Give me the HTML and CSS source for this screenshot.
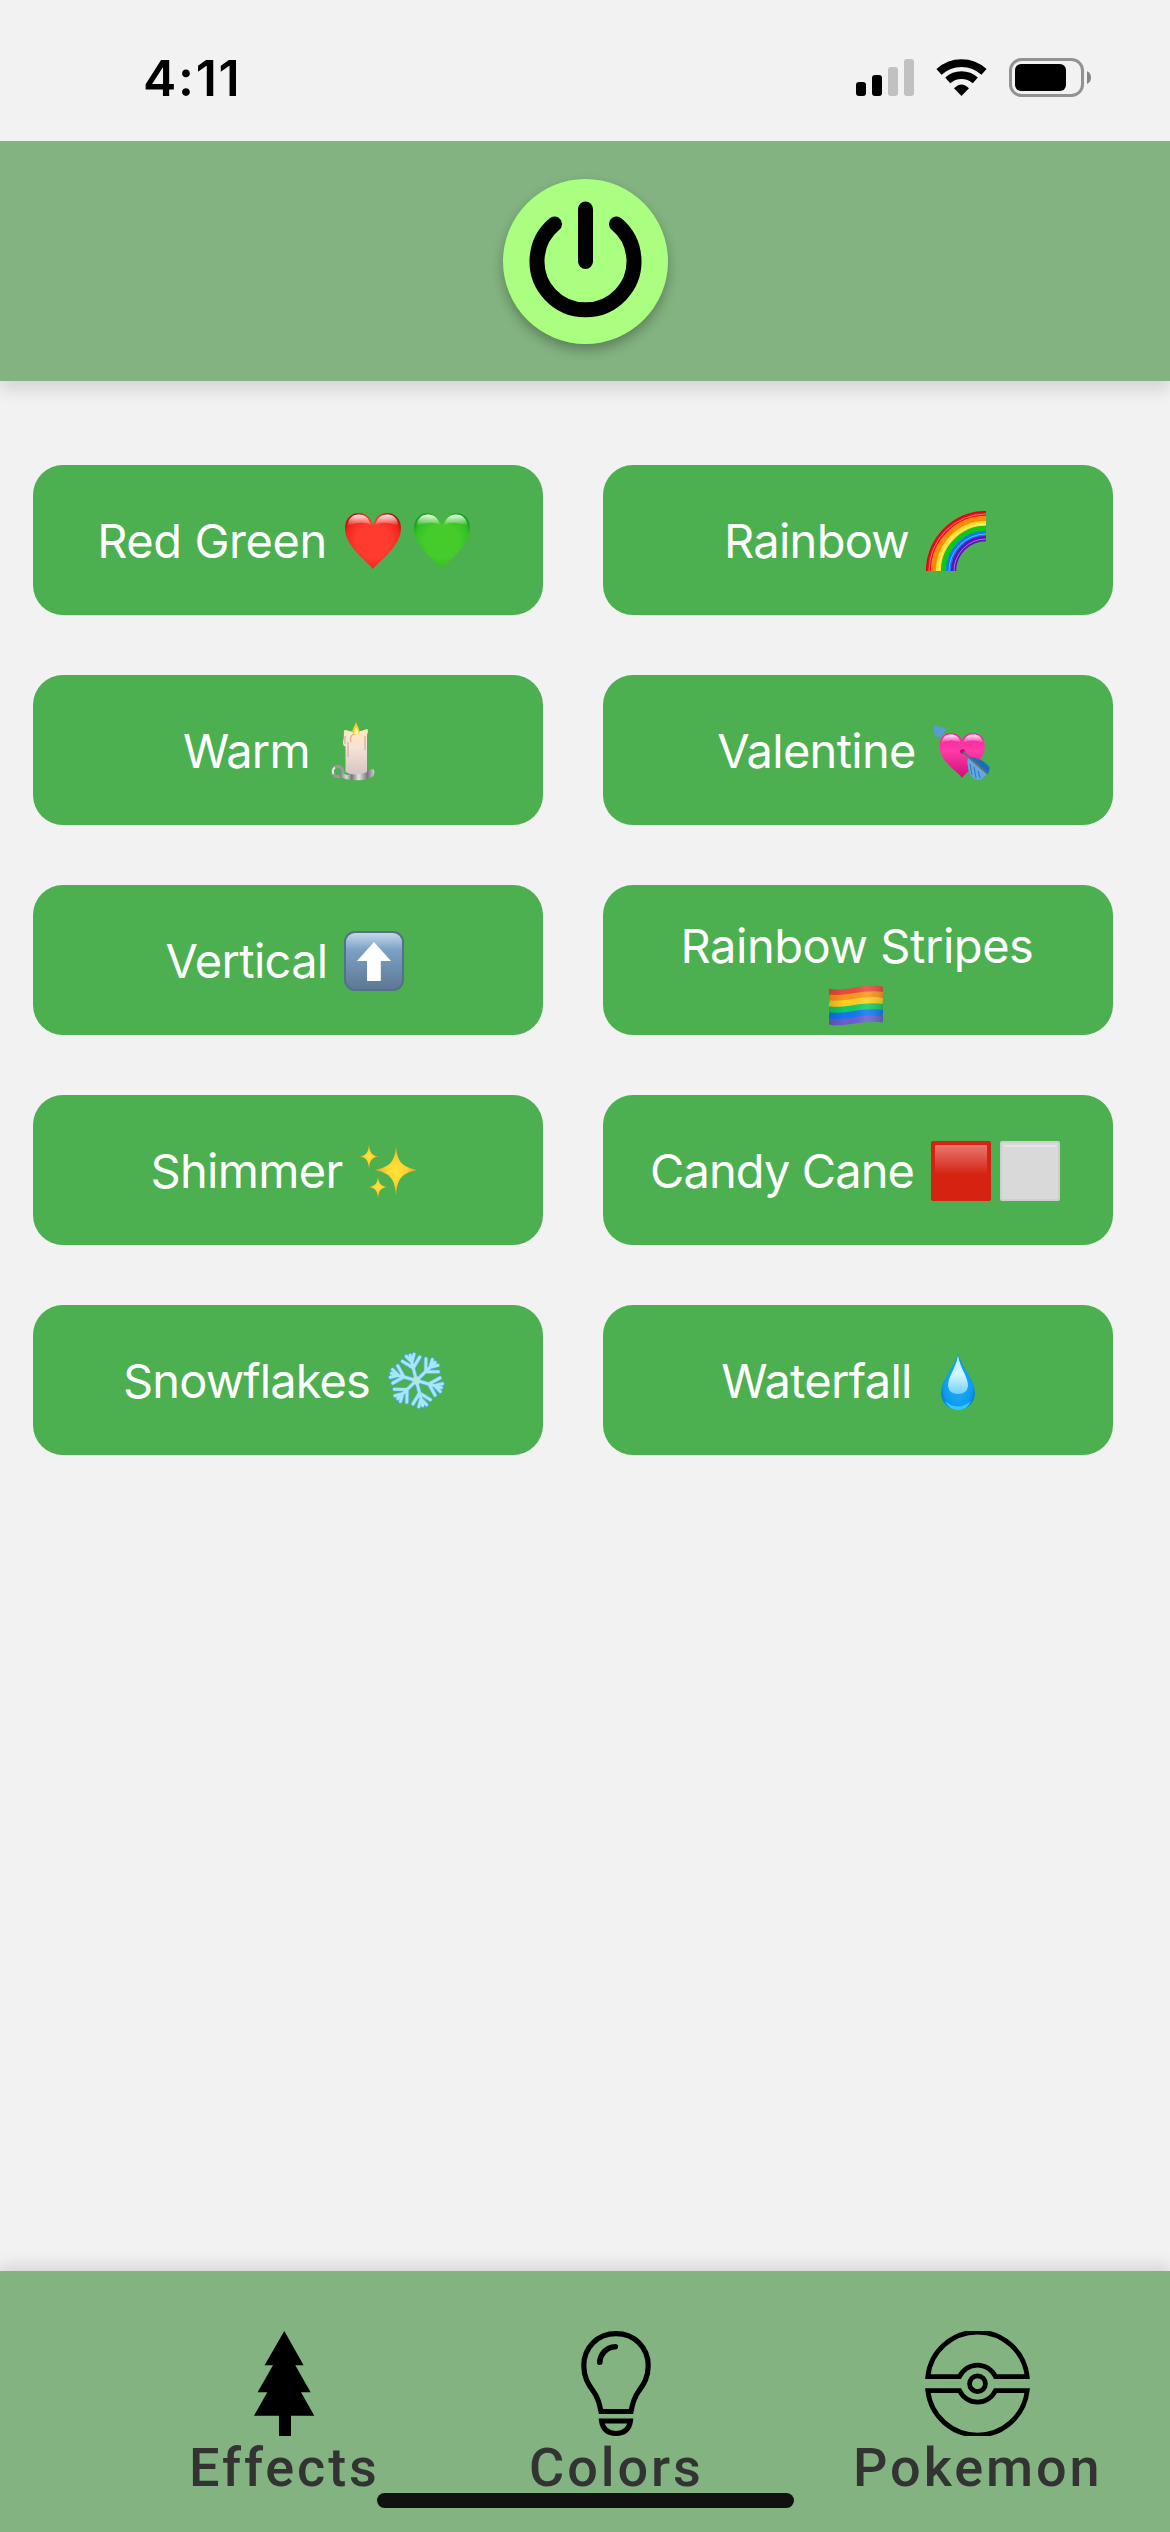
FILE: index.html
```html
<!DOCTYPE html>
<html lang="en">
<head>
<meta charset="utf-8">
<title>Lights</title>
<link rel="stylesheet" href="styles.css">
</head>
<body>
<div class="screen">
  <div class="status">
    <span class="time">4:11</span>
    <div class="status-icons">
      <svg class="signal" width="58" height="37" viewBox="0 0 58 37">
        <rect x="0" y="23" width="10" height="14" rx="3"/>
        <rect x="16" y="16" width="10" height="21" rx="3"/>
        <rect x="32" y="8" width="10" height="29" rx="3" fill="#c1c1c1"/>
        <rect x="48" y="0" width="10" height="37" rx="3" fill="#c1c1c1"/>
      </svg>
      <svg class="wifi" width="51" height="37" viewBox="0 0 51 37">
        <g fill="none" stroke="#000" stroke-width="7.6">
          <path d="M3 12.9A33.2 33.2 0 0 1 48 12.9"/>
          <path d="M11.7 21.4A20.8 20.8 0 0 1 39.3 21.4"/>
        </g>
        <path d="M25.5 37L18 29.3Q25.500 21.500 33 29.300Z"/>
      </svg>
      <svg class="battery" width="82" height="39" viewBox="0 0 82 39">
        <rect x="1.500" y="1.500" width="72" height="36" rx="11" fill="none" stroke="#929292" stroke-width="3"/>
        <rect x="6" y="6" width="51" height="27" rx="6"/>
        <path d="M78 13Q82 15 82 19.500T78 26Z" fill="#858585"/>
      </svg>
    </div>
  </div>

  <header class="header">
    <button class="power" aria-label="Power">
      <svg width="165" height="165" viewBox="0 0 165 165" fill="none" stroke="#000" stroke-width="15" stroke-linecap="round">
        <path d="M82.500 30V82.500"/>
        <path d="M51.500 45A48.500 48.500 0 1 0 113.500 45"/>
      </svg>
    </button>
  </header>

  <main class="grid">
    <button class="effect"><span class="label loose">Red Green</span>
      <svg class="emoji" viewBox="0 0 60 60">
        <defs>
          <radialGradient id="red" cx=".5" cy=".5" r=".6"><stop offset=".5" stop-color="#ff3b2f"/><stop offset=".8" stop-color="#f5281d"/><stop offset="1" stop-color="#b80c06"/></radialGradient>
          <linearGradient id="gloss" x1="0" y1="0" x2="0" y2="1"><stop offset="0" stop-color="#fff" stop-opacity=".95"/><stop offset="1" stop-color="#fff" stop-opacity="0"/></linearGradient>
        </defs>
        <path d="M30 58C27 53 2 36 2 17.500C2 8 8 2 16 2C23 2 28 7 30 14.500C32 7 37 2 44 2C52 2 58 8 58 17.500C58 36 33 53 30 58Z" fill="url(#red)"/>
        <path d="M4.500 15C5 8 9 3.500 16 3.500C22 3.500 26 7 28 14Q20 9 4.500 15ZM55.500 15C55 8 51 3.500 44 3.500C38 3.500 34 7 32 14Q40 9 55.500 15Z" fill="url(#gloss)"/>
      </svg>
      <svg class="emoji" viewBox="0 0 60 60">
        <defs><radialGradient id="green" cx=".5" cy=".5" r=".6"><stop offset=".5" stop-color="#45cc2b"/><stop offset=".8" stop-color="#34c024"/><stop offset="1" stop-color="#0a9a18"/></radialGradient></defs>
        <path d="M30 58C27 53 2 36 2 17.500C2 8 8 2 16 2C23 2 28 7 30 14.500C32 7 37 2 44 2C52 2 58 8 58 17.500C58 36 33 53 30 58Z" fill="url(#green)"/>
        <path d="M4.500 15C5 8 9 3.500 16 3.500C22 3.500 26 7 28 14Q20 9 4.500 15ZM55.500 15C55 8 51 3.500 44 3.500C38 3.500 34 7 32 14Q40 9 55.500 15Z" fill="url(#gloss)"/>
      </svg>
    </button>

    <button class="effect"><span class="label">Rainbow</span>
      <svg class="emoji" viewBox="0 0 60 60" fill="none" stroke-width="5.300">
        <path d="M2.500 60A57.500 59 0 0 1 60 2.500" stroke="#e8101c"/>
        <path d="M7.500 60A52.500 53 0 0 1 60 7.500" stroke="#ff8a08"/>
        <path d="M12.500 60A47.500 48 0 0 1 60 12.500" stroke="#ffdf2e"/>
        <path d="M17.500 60A42.500 43 0 0 1 60 17.500" stroke="#12c51a"/>
        <path d="M22.500 60A37.500 38 0 0 1 60 22.500" stroke="#0b7bf0"/>
        <path d="M27.500 60A32.500 33 0 0 1 60 27.500" stroke="#5a14bd"/>
        <g stroke-width="1" stroke-opacity=".4">
          <path d="M3 60A57 57 0 0 1 60 3M13 60A47 47 0 0 1 60 13M23 60A37 37 0 0 1 60 23M28 60A32 32 0 0 1 60 28" stroke="#fff"/>
          <path d="M.5 60A59.500 59.500 0 0 1 60 .5" stroke="#a00"/>
        </g>
      </svg>
    </button>

    <button class="effect"><span class="label">Warm</span>
      <svg class="emoji" viewBox="0 0 60 60">
        <defs>
          <linearGradient id="wax" x1="0" y1="0" x2="0" y2="1"><stop offset="0" stop-color="#ffe9bd"/><stop offset=".4" stop-color="#f7e2d6"/><stop offset="1" stop-color="#d5c5c3"/></linearGradient>
          <linearGradient id="metal"><stop offset="0" stop-color="#777"/><stop offset=".2" stop-color="#d8d8d8"/><stop offset=".35" stop-color="#777"/><stop offset=".55" stop-color="#e6e6e6"/><stop offset=".8" stop-color="#777"/><stop offset="1" stop-color="#d0d0d0"/></linearGradient>
        </defs>
        <circle cx="10.800" cy="50.500" r="5.200" fill="none" stroke="#999" stroke-width="3.200"/>
        <path d="M6.500 53A5 5 0 0 1 8 46.500" fill="none" stroke="#ececec" stroke-width="2"/>
        <path d="M13 51L20 54L46 48Q48.500 49 46.500 55Q42 59 30 59.300Q18 59 12.500 55.500Z" fill="url(#metal)"/>
        <path d="M17 11Q16 9 19 9Q25 12 34 10L40 8Q42 9 40 14V51Q28 56 18.500 51V25Q16 26 16 21Q17 17 17 11Z" fill="url(#wax)"/>
        <path d="M18 23V15M24 21Q22 14 28 13M21 36V21M38 29V15" fill="none" stroke="#cfaea0" stroke-width="1.200"/>
        <path d="M29 1C30 5 34 9 32 12.500Q29 15 26 12.500C24 9 28 5 29 1Z" fill="#ffc928"/>
        <path d="M29 6Q32 10 31 13Q29 14 27.500 13Q27 10 29 6Z" fill="#fff8c9"/>
      </svg>
    </button>

    <button class="effect"><span class="label">Valentine</span>
      <svg class="emoji" viewBox="0 0 60 60">
        <defs><linearGradient id="pink" x1="0" y1="0" x2="0" y2="1"><stop offset="0" stop-color="#f5229a"/><stop offset=".4" stop-color="#ff3ba8"/><stop offset="1" stop-color="#cf0c78"/></linearGradient></defs>
        <path d="M8 10L18 20" stroke="#8895a0" stroke-width="2"/>
        <path d="M2 5Q6 3.500 8.500 6Q12 5 13.500 8Q12.500 12 10 16Q5 17 3 14.500Q1 10 2 5Z" fill="#5b9bd0"/>
        <path d="M30 57C27 51 7.500 41 7.500 25.500C7.500 16 12 12 18.500 12C25 12 29 15 30 20C31.500 15 35 12 41.500 12C48 12 52.800 17 52.800 25.500C52.800 41 33 51 30 57Z" fill="url(#pink)"/>
        <path d="M9.500 22C10 16 14 13.500 18.500 13.500C24 13.500 27.500 16 29 22Q19 17 9.500 22ZM51 22C50.500 16 46 13.500 41.500 13.500C36 13.500 32.500 16 31 22Q41 17 51 22Z" fill="url(#gloss)"/>
        <path d="M36 36Q49 36 57.500 46Q58 51 55 53Z" fill="#176fbb"/>
        <path d="M36 36L55 53Q51 58 46.500 59Q41 58 38.500 54Q34 45 36 36Z" fill="#62a9e2"/>
        <path d="M38 43L40 54M42 46L44 57M46 50L48 57" stroke="#377fb9" stroke-width="1.200"/>
        <circle cx="30.500" cy="30.500" r="2.300" fill="#a9085a"/>
        <path d="M30.500 30.500L56 53" stroke="#626c77" stroke-width="2.200"/>
      </svg>
    </button>

    <button class="effect"><span class="label">Vertical</span>
      <svg class="emoji" viewBox="0 0 60 60">
        <defs><linearGradient id="key" x1="0" y1="0" x2="0" y2="1"><stop offset="0" stop-color="#c4d8e9"/><stop offset=".3" stop-color="#7ca1c6"/><stop offset="1" stop-color="#5d7893"/></linearGradient></defs>
        <rect width="60" height="60" rx="11" fill="#55708c"/>
        <rect x="2" y="2" width="56" height="56" rx="9" fill="url(#key)"/>
        <path d="M30 11L47 30H36.800V50H23V30H13Z" fill="#fff"/>
      </svg>
    </button>

    <button class="effect two-line"><span class="label loose">Rainbow Stripes</span>
      <svg class="emoji" viewBox="0 0 60 60">
        <defs><clipPath id="wave"><path d="M2 12.500C17 17 37 6 56 10.500V46.500C37 43 17 52 2 48.500Z"/></clipPath>
        <linearGradient id="fold"><stop offset="0" stop-color="#000" stop-opacity=".18"/><stop offset=".3" stop-color="#000" stop-opacity="0"/><stop offset=".65" stop-color="#fff" stop-opacity=".12"/><stop offset="1" stop-color="#000" stop-opacity=".22"/></linearGradient></defs>
        <g clip-path="url(#wave)">
          <g fill="none" stroke-width="6.800">
            <path d="M2 15.500C17 20 37 9 56 13.500" stroke="#e94b3e" stroke-width="8"/>
            <path d="M2 21.500C17 25.500 37 15 56 19.500" stroke="#ff951c"/>
            <path d="M2 27.500C17 31 37 21 56 25.500" stroke="#ffd01f"/>
            <path d="M2 33.500C17 37 37 27.500 56 31.500" stroke="#14cb66"/>
            <path d="M2 39.500C17 43 37 33.500 56 37.500" stroke="#1078f6"/>
            <path d="M2 46C17 49 37 40 56 44" stroke="#695fd0" stroke-width="7"/>
          </g>
          <rect width="60" height="60" fill="url(#fold)"/>
        </g>
      </svg>
    </button>

    <button class="effect"><span class="label">Shimmer</span>
      <svg class="emoji" viewBox="0 0 60 60">
        <defs><radialGradient id="star"><stop offset="0" stop-color="#ffe53b"/><stop offset=".5" stop-color="#ffd22e"/><stop offset="1" stop-color="#f28a20"/></radialGradient></defs>
        <g fill="url(#star)">
          <path d="M37 4C38 20 42 26 59 29C42 32 38 38 37 56C36 38 32 32 15 29C32 26 36 20 37 4Z"/>
          <path d="M10 3C11 12 12 14 19.500 15.500C12 17 11 19 10 28C9 19 8 17 .5 15.500C8 14 9 12 10 3Z"/>
          <path d="M19 35C20 43 21 44.500 28.500 46C21 47.500 20 49 19 57.500C18 49 17 47.500 9.500 46C17 44.500 18 43 19 35Z"/>
        </g>
      </svg>
    </button>

    <button class="effect"><span class="label tight">Candy Cane</span>
      <svg class="emoji" viewBox="0 0 60 60">
        <defs><linearGradient id="shine" x1="0" y1="0" x2="0" y2="1"><stop offset="0" stop-color="#e8776e"/><stop offset="1" stop-color="#d52211"/></linearGradient></defs>
        <rect width="60" height="60" rx="2" fill="#d52211"/>
        <rect x="4" y="4" width="52" height="30" rx="1" fill="url(#shine)"/>
      </svg>
      <svg class="emoji" viewBox="0 0 60 60">
        <rect width="60" height="60" rx="2" fill="#cfcfcf"/>
        <rect x="2" y="2" width="56" height="56" fill="#d9d9d9"/>
        <path d="M4 5H56" stroke="#e5e5e5" stroke-width="2"/>
      </svg>
    </button>

    <button class="effect"><span class="label tight">Snowflakes</span>
      <svg class="emoji" viewBox="0 0 60 60">
        <defs>
          <g id="arm"><path d="M0 0V-26M0 -13L-9 -22M0 -13L9 -22M0 -19L-4 -26M0 -19L4 -26"/></g>
          <g id="flake"><use href="#arm"/><use href="#arm" transform="rotate(60)"/><use href="#arm" transform="rotate(120)"/><use href="#arm" transform="rotate(180)"/><use href="#arm" transform="rotate(240)"/><use href="#arm" transform="rotate(300)"/></g>
        </defs>
        <g transform="translate(30.400 29.500) rotate(-14)" fill="none" stroke-linecap="round">
          <use href="#flake" stroke="#53a9e6" stroke-width="4.600"/>
          <use href="#flake" stroke="#a5e6f8" stroke-width="3"/>
          <circle r="4" fill="#b4e6da"/>
        </g>
      </svg>
    </button>

    <button class="effect"><span class="label">Waterfall</span>
      <svg class="emoji" viewBox="0 0 60 60">
        <defs>
          <radialGradient id="drop" cx=".5" cy=".55" r=".55"><stop offset=".4" stop-color="#18a4f0"/><stop offset=".75" stop-color="#0b9cf0"/><stop offset="1" stop-color="#0879cf"/></radialGradient>
          <linearGradient id="dropshine" x1="0" y1="0" x2="0" y2="1"><stop offset="0" stop-color="#b7edfb"/><stop offset=".5" stop-color="#d3f7ff"/><stop offset="1" stop-color="#6fd0fa"/></linearGradient>
        </defs>
        <path d="M30 3C34 17 47 28 47 42A17 17 0 0 1 13 42C13 28 26 17 30 3Z" fill="url(#drop)"/>
        <path d="M17 50Q30 61 43 50Q39 59 30 59T17 50Z" fill="#38c6ff"/>
        <path d="M30 4C32 18 40 25 40 35Q39 43 30 43T20 35C20 25 28 18 30 4Z" fill="url(#dropshine)"/>
      </svg>
    </button>
  </main>

  <nav class="tabs">
    <a class="tab">
      <svg width="61" height="105" viewBox="0 0 61 105"><path d="M30.300 0L49.600 34.300H41.300L56.600 61.300H47L60.300 84.700H37V105H25V84.700H0L13.300 61.300H3.600L19 34.300H10.600Z"/></svg>
      <span>Effects</span>
    </a>
    <a class="tab">
      <svg width="70" height="105" viewBox="0 0 70 105" fill="none" stroke="#000" stroke-width="5.200">
        <path d="M35 2.600C16.500 2.600 2.800 16.500 2.800 34.500C2.800 46 7 53 12.500 60.500Q17.500 67 20 80.500H50Q52.500 67 57.500 60.500C63 53 67.200 46 67.200 34.500C67.200 16.500 53.500 2.600 35 2.600Z"/>
        <path d="M18.800 31.300A16 16 0 0 1 34.300 15.700" stroke-linecap="round" stroke-width="5.600"/>
        <path d="M20.500 90H49.500Q47.500 102.400 35 102.400T20.500 90Z" stroke-width="5"/>
      </svg>
      <span>Colors</span>
    </a>
    <a class="tab">
      <svg width="105" height="105" viewBox="0 0 105 105" fill="none" stroke="#000" stroke-width="4.800">
        <path d="M2.800 45.600A50 50 0 0 1 102.200 45.600H70.500A19.800 19.800 0 0 0 34.500 45.600Z"/>
        <path d="M2.800 59.600A50 50 0 0 0 102.200 59.600H70.500A19.800 19.800 0 0 1 34.500 59.600Z"/>
        <circle cx="52.500" cy="52.700" r="7.900"/>
      </svg>
      <span>Pokemon</span>
    </a>
    <div class="home-indicator"></div>
  </nav>
</div>
</body>
</html>
```
FILE: styles.css
```css
* { box-sizing: border-box; }

body {
  margin: 0;
  background: #f2f2f2;
  font-family: Inter, "Liberation Sans", sans-serif;
}

button {
  border: 0;
  font: inherit;
}

svg { display: block; flex: none; }

.screen {
  display: flex;
  flex-direction: column;
  width: 1170px;
  height: 2532px;
  overflow: hidden;
}

.status {
  display: flex;
  justify-content: space-between;
  flex: none;
  height: 141px;
  padding: 48px 79px 0 143px;
}

.time {
  font-size: 50px;
  font-weight: 600;
  line-height: 60px;
  letter-spacing: 1.7px;
}

.status-icons {
  display: flex;
  height: 60px;
  padding-top: 10px;
}

.signal { margin: 1px 22px 0 0; }
.wifi { margin: 1px 22px 0 0; }

.header {
  display: flex;
  align-items: center;
  justify-content: center;
  flex: none;
  height: 240px;
  background: #82b380;
  box-shadow: 0 9px 15px rgba(0, 0, 0, 0.12);
  clip-path: inset(0 0 -40px 0);
}

.power {
  width: 165px;
  height: 165px;
  padding: 0;
  border-radius: 50%;
  background: #aaff80;
  box-shadow: 0 6px 12px rgba(0, 0, 0, 0.28);
}

.grid {
  display: grid;
  grid-template-columns: 510px 510px;
  grid-auto-rows: 150px;
  gap: 60px;
  align-content: start;
  flex: 1;
  padding: 84px 33px 0;
}

.effect {
  display: flex;
  align-items: center;
  justify-content: center;
  padding: 2px 2px 0 0;
  border-radius: 30px;
  background: #4caf50;
  color: #fff;
  font-size: 47px;
  line-height: 60px;
}

.label {
  margin-right: 12px;
  letter-spacing: -0.7px;
  white-space: nowrap;
}

.label.loose { letter-spacing: -0.45px; }
.label.tight { letter-spacing: -0.9px; }

.emoji {
  width: 60px;
  height: 60px;
  margin: 0 4.5px;
}

.two-line {
  flex-direction: column;
  justify-content: flex-start;
  padding-top: 31px;
}

.two-line .label { margin-right: 0; }

.tabs {
  position: relative;
  display: flex;
  align-items: flex-start;
  gap: 149.4px;
  flex: none;
  height: 261px;
  padding: 60px 0 0 189px;
  background: #82b380;
  box-shadow: 0 -6px 15px rgba(0, 0, 0, 0.12);
}

.tab {
  display: flex;
  flex-direction: column;
  align-items: center;
  gap: 2px;
  color: #333;
  font: 500 54px/60px Roboto, sans-serif;
  letter-spacing: 2.9px;
}

.home-indicator {
  position: absolute;
  left: 377px;
  bottom: 24px;
  width: 417px;
  height: 15px;
  border-radius: 8px;
  background: #111;
}
```
